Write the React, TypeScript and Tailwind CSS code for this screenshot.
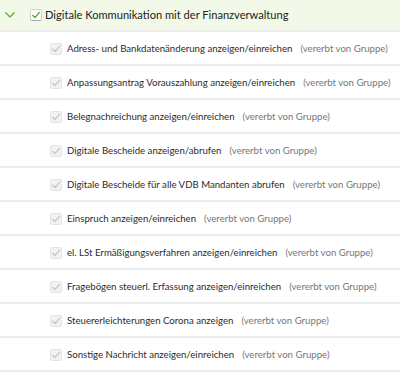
import React from "react";

const items = [
  "Adress- und Bankdatenänderung anzeigen/einreichen",
  "Anpassungsantrag Vorauszahlung anzeigen/einreichen",
  "Belegnachreichung anzeigen/einreichen",
  "Digitale Bescheide anzeigen/abrufen",
  "Digitale Bescheide für alle VDB Mandanten abrufen",
  "Einspruch anzeigen/einreichen",
  "el. LSt Ermäßigungsverfahren anzeigen/einreichen",
  "Fragebögen steuerl. Erfassung anzeigen/einreichen",
  "Steuererleichterungen Corona anzeigen",
  "Sonstige Nachricht anzeigen/einreichen",
];

function Check({ color }: { color: string }) {
  return (
    <svg width="10" height="10" viewBox="0 0 10 10" fill="none">
      <path d="M1.6 5.3 L4 7.5 L8.5 2.3" stroke={color} strokeWidth="1.2" strokeLinecap="round" strokeLinejoin="round" />
    </svg>
  );
}

export default function App() {
  return (
    <div className="w-[400px] h-[381px] bg-white text-[#333333] whitespace-nowrap font-['Lato',sans-serif]">
      <div className="h-[30px] bg-[#f3f9e8] flex items-center border-b-2 border-[#ececec] box-content">
        <svg className="ml-[5px]" width="10" height="6" viewBox="0 0 10 6" fill="none">
          <path d="M0.8 0.8 L5 5 L9.2 0.8" stroke="#5fae2e" strokeWidth="1.3" strokeLinecap="round" strokeLinejoin="round" />
        </svg>
        <div className="ml-[15px] w-[12px] h-[12px] bg-white border border-[#d0d0d0] border-b-[#a8a8a8] rounded-[2px] flex items-center justify-center">
          <Check color="#4caf20" />
        </div>
        <span className="ml-[3px] text-[11.1px] text-[#222222]">Digitale Kommunikation mit der Finanzverwaltung</span>
      </div>
      {items.map((t) => (
        <div key={t} className="h-[32px] flex items-center border-b-2 border-[#ececec] box-content">
          <div className="ml-[50px] mt-[1px] w-[12px] h-[12px] bg-[#f2f2f2] border border-[#e4e4e4] rounded-[2px] flex items-center justify-center">
            <Check color="#c4c4c4" />
          </div>
          <span className="ml-[5px] text-[9.65px] text-[#2b2b2b]">{t}</span>
          <span className="ml-[8px] text-[9.65px] text-[#777777]">(vererbt von Gruppe)</span>
        </div>
      ))}
    </div>
  );
}
